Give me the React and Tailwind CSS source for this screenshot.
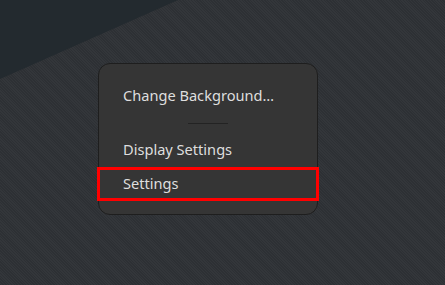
import React from "react";

export default function App() {
  return (
    <div
      className="relative w-[445px] h-[285px] overflow-hidden bg-[#303338] bg-[repeating-linear-gradient(45deg,#2d3034_0px,#2d3034_1px,#33363a_1px,#33363a_2px)]"
      style={{ fontFamily: '"Noto Sans", "Open Sans", sans-serif' }}
    >
      <svg className="absolute left-0 top-0" width="445" height="285" viewBox="0 0 445 285">
        <polygon points="0,0 178,0 0,79" fill="#232a2f" />
      </svg>

      <div className="absolute left-[98px] top-[63px] w-[220px] h-[152px] rounded-[12px] border border-[#1e1e1e] bg-[#353535] text-[14.6px] text-[#dedede] flex flex-col pt-[15px]">
        <div className="h-[34px] flex items-center pl-[24px]">Change Background…</div>
        <div className="h-[20px] flex items-center justify-center">
          <div className="w-[40px] h-px bg-[#232323]" />
        </div>
        <div className="h-[34px] flex items-center pl-[24px]">Display Settings</div>
        <div className="h-[34px] flex items-center pl-[24px]">Settings</div>
      </div>

      <div className="absolute left-[97px] top-[167px] w-[222px] h-[34px] border-[3px] border-[#ff0000]" />
    </div>
  );
}
